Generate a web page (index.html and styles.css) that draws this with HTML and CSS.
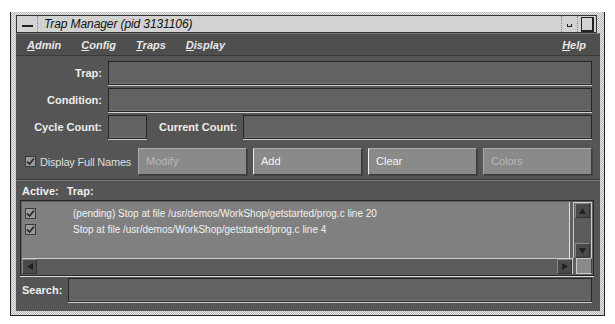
FILE: index.html
```html
<!DOCTYPE html>
<html lang="en">
<head>
    <meta charset="UTF-8">
    <title>Trap Manager</title>
    <link rel="stylesheet" href="styles.css">
</head>
<body>
    <div class="window">
        <div class="titlebar">
            <div class="tb-menu"><span class="dash"></span></div>
            <div class="tb-title">Trap Manager (pid 3131106)</div>
            <div class="tb-min"><span class="mini"></span></div>
            <div class="tb-max"><span class="maxi"></span></div>
        </div>
        <div class="menubar">
            <span class="menu"><u>A</u>dmin</span>
            <span class="menu"><u>C</u>onfig</span>
            <span class="menu"><u>T</u>raps</span>
            <span class="menu"><u>D</u>isplay</span>
            <span class="menu help"><u>H</u>elp</span>
        </div>
        <div class="content">
            <div class="fields">
                <label class="lbl">Trap:</label>
                <div class="field"></div>
                <label class="lbl">Condition:</label>
                <div class="field"></div>
                <label class="lbl">Cycle Count:</label>
                <div class="count-row">
                    <div class="field small"></div>
                    <label class="lbl inline">Current Count:</label>
                    <div class="field grow"></div>
                </div>
            </div>

            <div class="actions">
                <div class="toggle">
                    <span class="check">
                        <svg width="11" height="11" viewBox="0 0 11 11"><rect x="0.5" y="0.5" width="10" height="10" fill="#9a9a9a" stroke="#3a3a3a"/><path d="M2 5.5 L4.5 8 L9 2.5" fill="none" stroke="#222" stroke-width="1.6"/></svg>
                    </span>
                    Display Full Names
                </div>
                <div class="btn disabled">Modify</div>
                <div class="btn">Add</div>
                <div class="btn">Clear</div>
                <div class="btn disabled">Colors</div>
            </div>

            <div class="sep"></div>

            <div class="list-head"><span>Active:</span><span>Trap:</span></div>

            <div class="listbox">
                <div class="list-main">
                    <div class="items">
                        <div class="item">
                            <span class="check">
                                <svg width="11" height="11" viewBox="0 0 11 11"><rect x="0.5" y="0.5" width="10" height="10" fill="#9a9a9a" stroke="#3a3a3a"/><path d="M2 5.5 L4.5 8 L9 2.5" fill="none" stroke="#222" stroke-width="1.6"/></svg>
                            </span>
                            <span class="trap">(pending) Stop at file /usr/demos/WorkShop/getstarted/prog.c line 20</span>
                        </div>
                        <div class="item">
                            <span class="check">
                                <svg width="11" height="11" viewBox="0 0 11 11"><rect x="0.5" y="0.5" width="10" height="10" fill="#9a9a9a" stroke="#3a3a3a"/><path d="M2 5.5 L4.5 8 L9 2.5" fill="none" stroke="#222" stroke-width="1.6"/></svg>
                            </span>
                            <span class="trap">Stop at file /usr/demos/WorkShop/getstarted/prog.c line 4</span>
                        </div>
                    </div>
                    <div class="vscroll">
                        <div class="arrow"><svg width="9" height="8" viewBox="0 0 9 8"><path d="M4.5 1 L8 7 L1 7 Z" fill="#222"/></svg></div>
                        <div class="trough"></div>
                        <div class="arrow"><svg width="9" height="8" viewBox="0 0 9 8"><path d="M1 1 L8 1 L4.5 7 Z" fill="#222"/></svg></div>
                    </div>
                </div>
                <div class="list-bottom">
                    <div class="hscroll">
                        <div class="arrow"><svg width="8" height="9" viewBox="0 0 8 9"><path d="M1 4.5 L7 1 L7 8 Z" fill="#222"/></svg></div>
                        <div class="trough"></div>
                        <div class="arrow"><svg width="8" height="9" viewBox="0 0 8 9"><path d="M1 1 L7 4.5 L1 8 Z" fill="#222"/></svg></div>
                    </div>
                    <div class="corner"></div>
                </div>
            </div>

            <div class="search-row">
                <label class="lbl">Search:</label>
                <div class="field grow"></div>
            </div>
        </div>
    </div>
</body>
</html>
```

FILE: styles.css
```css
body {
    margin: 0;
    background: #fff;
    font-family: "Liberation Sans", Arial, sans-serif;
}
.window {
    margin: 12px 0 0 10px;
    width: 584px;
    height: 296px;
    padding: 3px 4px 4px 5px;
    border-left: 1px solid #222;
    border-right: 1px solid #222;
    border-bottom: 1px solid #222;
    background: repeating-conic-gradient(#b8b8b8 0 25%, #e8e8e8 0 50%) 0 0/2px 2px;
    display: flex;
    flex-direction: column;
}
.titlebar {
    height: 16px;
    width: 579px;
    background: #d2d2d2;
    border: 1px solid #333;
    display: flex;
    align-items: stretch;
}
.tb-menu {
    width: 20px;
    border-right: 1px dotted #888;
    display: flex;
    align-items: center;
    justify-content: center;
}
.dash {
    width: 11px;
    height: 2px;
    background: #222;
    margin-top: 4px;
}
.tb-title {
    flex: 1;
    padding-left: 6px;
    font-size: 12px;
    font-style: italic;
    line-height: 16px;
    color: #111;
    letter-spacing: -0.1px;
}
.tb-min {
    width: 15px;
    border-left: 1px dotted #888;
    display: flex;
    align-items: center;
    justify-content: center;
}
.mini {
    width: 3px;
    height: 2px;
    border: 1px solid #222;
    border-top: none;
    margin-top: 2px;
}
.tb-max {
    width: 18px;
    border-left: 1px dotted #888;
    display: flex;
    align-items: center;
    justify-content: center;
}
.maxi {
    width: 10px;
    height: 12px;
    border: 1px solid #222;
    border-right-width: 2px;
    border-bottom-width: 2px;
}
.menubar {
    height: 21px;
    background: #4e4e4e;
    border-top: 1px solid #777;
    border-bottom: 1px solid #3a3a3a;
    display: flex;
    align-items: center;
    padding-left: 11px;
}
.menu {
    font-size: 11px;
    font-weight: bold;
    font-style: italic;
    color: #e8e8e8;
    margin-right: 20px;
}
.menu.help {
    margin-left: auto;
    margin-right: 14px;
}
.content {
    flex: 1;
    background: #555;
    padding: 5px 8px 0 0;
    display: flex;
    flex-direction: column;
}
.lbl {
    font-size: 11px;
    font-weight: bold;
    color: #eee;
    text-align: right;
    line-height: 24px;
}
.fields {
    display: grid;
    grid-template-columns: 86px 1fr;
    column-gap: 6px;
    row-gap: 3px;
}
.field {
    height: 22px;
    background: #626262;
    border: 1px solid #262626;
    box-shadow: 0 1px 0 #d0d0d0, inset 0 -1px 0 #777;
}
.count-row {
    display: flex;
}
.field.small {
    width: 37px;
}
.lbl.inline {
    margin: 0 6px 0 12px;
}
.field.grow {
    flex: 1;
}
.actions {
    display: flex;
    align-items: center;
    margin-top: 9px;
    height: 27px;
    gap: 6px;
}
.toggle {
    width: 107px;
    padding-left: 9px;
    font-size: 11px;
    letter-spacing: -0.2px;
    white-space: nowrap;
    color: #ddd;
    display: flex;
    align-items: center;
}
.check {
    display: inline-flex;
    margin-right: 4px;
}
.btn {
    width: 100px;
    height: 25px;
    padding-left: 7px;
    background: #8a8a8a;
    border: 1px solid #3a3a3a;
    border-top-color: #aaa;
    border-left-color: #eee;
    box-shadow: 1px 1px 0 #444;
    font-size: 11px;
    line-height: 25px;
    color: #f4f4f4;
}
.btn.disabled {
    color: #b8b8b8;
    border-left-color: #aaa;
}
.sep {
    margin-top: 4px;
    margin-right: -8px;
    height: 1px;
    background: #3c3c3c;
    border-bottom: 1px solid #777;
}
.list-head {
    display: flex;
    gap: 8px;
    padding-left: 6px;
    font-size: 11px;
    font-weight: bold;
    color: #eee;
    height: 19px;
    line-height: 20px;
}
.listbox {
    margin-left: 4px;
    margin-right: -2px;
    height: 72px;
    border: 1px solid #262626;
    box-shadow: 0 1px 0 #ddd;
    background: #606060;
    display: flex;
    flex-direction: column;
    padding: 1px;
}
.list-main {
    flex: 1;
    display: flex;
}
.items {
    flex: 1;
    background: #808080;
    border-right: 1px solid #ddd;
    padding-top: 3px;
}
.item {
    display: flex;
    align-items: center;
    height: 16px;
    padding-left: 3px;
}
.item .check {
    width: 44px;
}
.trap {
    font-size: 10px;
    color: #f2f2f2;
}
.vscroll {
    width: 17px;
    margin-left: 3px;
    display: flex;
    flex-direction: column;
    background: #5c5c5c;
    border: 1px solid #ccc;
    border-bottom: none;
}
.arrow {
    width: 15px;
    height: 15px;
    background: #4a4a4a;
    border: 1px solid #888;
    border-right-color: #333;
    border-bottom-color: #333;
    box-sizing: border-box;
    display: flex;
    align-items: center;
    justify-content: center;
}
.vscroll .arrow {
    margin: 0 1px;
}
.trough {
    flex: 1;
}
.list-bottom {
    display: flex;
    height: 16px;
}
.hscroll {
    flex: 1;
    display: flex;
    align-items: center;
    background: #5c5c5c;
    border-top: 1px solid #ccc;
    border-right: 1px solid #ccc;
}
.corner {
    width: 16px;
    margin-left: 3px;
    background: #8a8a8a;
    border: 1px solid #ccc;
    border-right-color: #444;
    box-sizing: border-box;
}
.search-row {
    display: flex;
    gap: 6px;
    margin-top: 2px;
    padding-left: 6px;
}
.search-row .lbl {
    width: 40px;
    text-align: left;
}
```
